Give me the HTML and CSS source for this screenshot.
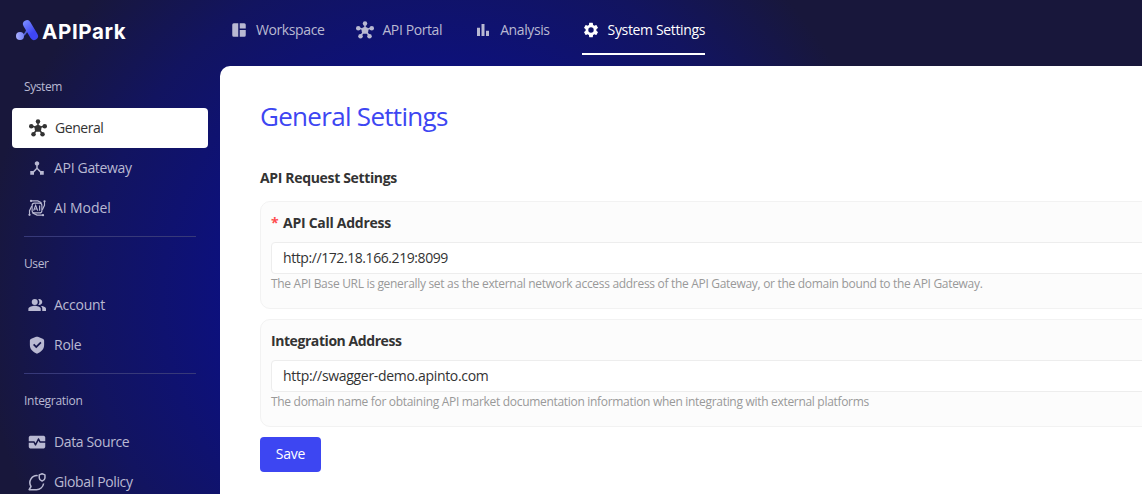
FILE: index.html
```html
<!DOCTYPE html>
<html lang="en">
<head>
<meta charset="utf-8">
<title>APIPark</title>
<link rel="stylesheet" href="styles.css">
</head>
<body>
<svg class="defs" aria-hidden="true">
  <symbol id="hub" viewBox="0 0 24 24"><path stroke="currentColor" stroke-width="2" fill="none" d="M12 12V4M12 12 3.5 9.3M12 12l8.5-2.7M12 12l-6 8M12 12l6 8"/><circle cx="12" cy="12.5" r="4.5"/><circle cx="12" cy="3.3" r="3"/><circle cx="3" cy="9.5" r="3"/><circle cx="21" cy="9.5" r="3"/><circle cx="6" cy="20.3" r="3"/><circle cx="18" cy="20.3" r="3"/></symbol>
</svg>
<div class="app">
  <header class="topbar">
    <div class="brand">
      <svg class="mark" viewBox="0 0 22 20">
        <defs>
          <linearGradient id="g1" gradientUnits="userSpaceOnUse" x1="7" y1="2" x2="20" y2="18"><stop offset="0" stop-color="#7a8cff"/><stop offset="0.7" stop-color="#3f46f5"/></linearGradient>
          <linearGradient id="g2" x1="0" y1="0" x2="1" y2="0"><stop offset="0" stop-color="#aab0ff"/><stop offset="1" stop-color="#7480f5"/></linearGradient>
        </defs>
        <path d="M5 16.2C8.500 16 10 13 11.500 9" fill="none" stroke="#5361d8" stroke-width="1.800"/>
        <path d="M11 4.200 18 16" stroke="url(#g1)" stroke-width="8" stroke-linecap="round"/>
        <circle cx="4" cy="16" r="4" fill="url(#g2)"/>
      </svg>
      <span class="brand-name">APIPark</span>
    </div>
    <nav class="tabs">
      <a class="tab workspace"><svg class="icon" viewBox="0 0 24 24"><path d="M11 21H5a2 2 0 0 1-2-2V5a2 2 0 0 1 2-2h6v18zm2 0h6a2 2 0 0 0 2-2v-7h-8v9zm8-11V5a2 2 0 0 0-2-2h-6v7h8z"/></svg><span>Workspace</span></a>
      <a class="tab portal"><svg class="icon"><use href="#hub"/></svg><span>API Portal</span></a>
      <a class="tab analysis"><svg class="icon" viewBox="0 0 24 24"><path d="M4 9h4v11H4zm12 4h4v7h-4zm-6-9h4v16h-4z"/></svg><span>Analysis</span></a>
      <a class="tab settings active"><svg class="icon" viewBox="0 0 24 24"><path d="M19.14 12.94c.04-.3.06-.61.06-.94 0-.32-.02-.64-.07-.94l2.03-1.58a.49.49 0 0 0 .12-.61l-1.92-3.32a.488.488 0 0 0-.59-.22l-2.39.96c-.5-.38-1.03-.7-1.62-.94l-.36-2.54a.484.484 0 0 0-.48-.41h-3.84c-.24 0-.43.17-.47.41l-.36 2.54c-.59.24-1.13.57-1.62.94l-2.39-.96c-.22-.08-.47 0-.59.22L2.74 8.87c-.12.21-.08.47.12.61l2.03 1.58c-.05.3-.09.63-.09.94s.02.64.07.94l-2.03 1.58a.49.49 0 0 0-.12.61l1.92 3.32c.12.22.37.29.59.22l2.39-.96c.5.38 1.03.7 1.62.94l.36 2.54c.05.24.24.41.48.41h3.84c.24 0 .44-.17.47-.41l.36-2.54c.59-.24 1.13-.56 1.62-.94l2.39.96c.22.08.47 0 .59-.22l1.92-3.32c.12-.22.07-.47-.12-.61l-2.01-1.58zM12 15.6A3.6 3.6 0 1 1 12 8.4a3.6 3.6 0 0 1 0 7.2z"/></svg><span>System Settings</span></a>
    </nav>
  </header>
  <div class="body">
    <aside class="side">
      <section class="group">
        <h2 class="group-title t-system">System</h2>
        <a class="item general active"><svg class="icon"><use href="#hub"/></svg><span>General</span></a>
        <a class="item gateway"><svg class="icon" viewBox="0 0 24 24"><path d="m17 16-4-4V8.82C14.16 8.4 15 7.3 15 6c0-1.66-1.34-3-3-3S9 4.34 9 6c0 1.3.84 2.4 2 2.82V12l-4 4H3v5h5v-3.05l4-4.2 4 4.2V21h5v-5h-4z"/></svg><span>API Gateway</span></a>
        <a class="item model"><svg class="icon" viewBox="0 0 24 24"><g fill="none" stroke="currentColor" stroke-width="1.5"><rect x="5.5" y="5.5" width="13" height="13" rx="3"/><path d="M4 2.500h9l5 2.500M22 3.500v5l-3 6M20 21.500h-8L6 18.500M2 20.500v-5l3-6"/><path d="m7.500 15.500 2.700-7 2.700 7M8.500 13.400h3.500M15.500 8.500v7"/></g><circle cx="4" cy="2.500" r="1.500"/><circle cx="22" cy="3" r="1.500"/><circle cx="20" cy="21.500" r="1.500"/><circle cx="2" cy="21" r="1.500"/></svg><span>AI Model</span></a>
      </section>
      <section class="group">
        <h2 class="group-title t-user">User</h2>
        <a class="item account"><svg class="icon" viewBox="0 0 24 24"><path d="M16.67 13.13C18.04 14.06 19 15.32 19 17v3h5v-3c0-2.18-4.57-3.47-7.33-3.87zM15 12c2.21 0 4-1.79 4-4s-1.79-4-4-4c-.47 0-.91.1-1.33.24a5.98 5.98 0 0 1 0 7.52c.42.14.86.24 1.33.24z"/><circle cx="9" cy="8" r="4"/><path d="M9 13c-2.67 0-8.500 1.340-8.500 4v3H17v-3c0-2.660-5.330-4-8-4z"/></svg><span>Account</span></a>
        <a class="item role"><svg class="icon" viewBox="0 0 24 24"><path fill-rule="evenodd" d="M10.800 1.100Q12 .6 13.200 1.100l6.400 2.500Q21.500 4.300 21.500 6v6c0 5.500-4 9.500-9.500 11.600C6.500 21.500 2.500 17.500 2.500 12V6q0-1.700 1.900-2.400zM11 16.200l7-7-1.600-1.600L11 13l-2.700-2.700-1.600 1.600z"/></svg><span>Role</span></a>
      </section>
      <section class="group">
        <h2 class="group-title t-integration">Integration</h2>
        <a class="item source"><svg class="icon" viewBox="0 0 24 24"><path d="M15.110 12.450 14 10.240l-3.110 6.210c-.16.34-.51.55-.89.55s-.73-.21-.89-.55L7.380 13H1v5c0 1.100.9 2.500 2 2.500h18c1.100 0 2-1.400 2-2.500v-5h-7c-.38 0-.73-.21-.89-.55zM21 3.500H3C1.900 3.500 1 4.900 1 6v5h7c.38 0 .73.21.89.55L10 13.760l3.110-6.210c.34-.68 1.450-.68 1.790 0L16.620 11H23V6c0-1.100-.9-2.500-2-2.500z"/></svg><span>Data Source</span></a>
        <a class="item policy"><svg class="icon" viewBox="0 0 24 24"><g fill="none" stroke="currentColor" stroke-width="2" stroke-linejoin="round"><path d="M13 3.500A9.500 9.500 0 0 0 4 18l-2.500 4.200H11a9.500 9.500 0 0 0 9.800-8.200"/><path d="M15 2.500 18.800 1l3.800 1.500v4c0 2-1.700 3.300-3.800 4.300C16.700 9.800 15 8.500 15 6.500z"/></g></svg><span>Global Policy</span></a>
      </section>
    </aside>
    <main class="page">
      <h1 class="title">General Settings</h1>
      <h2 class="subtitle">API Request Settings</h2>
      <div class="card">
        <label class="label"><span class="required">*</span><span class="l-call">API Call Address</span></label>
        <div class="input"><span class="v-call">http://172.18.166.219:8099</span></div>
        <p class="help"><span class="h-call">The API Base URL is generally set as the external network access address of the API Gateway, or the domain bound to the API Gateway.</span></p>
      </div>
      <div class="card">
        <label class="label"><span class="l-int">Integration Address</span></label>
        <div class="input"><span class="v-int">http://swagger-demo.apinto.com</span></div>
        <p class="help"><span class="h-int">The domain name for obtaining API market documentation information when integrating with external platforms</span></p>
      </div>
      <button class="save">Save</button>
    </main>
  </div>
</div>
</body>
</html>
```
FILE: styles.css
```css
* { box-sizing: border-box; }
body { margin: 0; overflow: hidden; font-family: "Open Sans", "Noto Sans", sans-serif; font-size: 14px; color: #333; }
h1, h2, p { margin: 0; font-weight: 400; }
.defs { display: none; }
.app { height: 494px; overflow: hidden; display: flex; flex-direction: column; background: radial-gradient(circle 460px at 440px 300px, #080d90 0%, #0c107f 45%, #121460 76%, #18173b 100%); }
.icon { width: 18px; height: 18px; flex: none; fill: currentColor; overflow: visible; }
.topbar { height: 66px; flex: none; display: flex; align-items: flex-start; }
.brand { width: 230px; flex: none; padding: 20px 0 0 16px; display: flex; align-items: flex-start; gap: 4px; }
.mark { width: 22px; height: 20px; overflow: visible; }
.brand-name { font: 700 20.5px/24px "Inter", sans-serif; letter-spacing: .65px; color: #fff; }
.tabs { display: flex; height: 55px; padding-top: 6px; }
.tab { display: flex; align-items: center; gap: 8px; color: #b9b9d2; white-space: nowrap; border-bottom: 2px solid transparent; margin-right: 32px; letter-spacing: -.4px; }
.tab.active { color: #fff; border-color: #fff; letter-spacing: -.35px; }
.body { flex: 1; min-height: 0; display: flex; }
.side { width: 220px; flex: none; padding: 1px 12px 0; color: #b9b9d2; }
.group + .group { margin-top: 8px; }
.group + .group::before { content: ""; display: block; height: 1px; margin: 0 12px 7px; background: #373979; }
.group-title { height: 40px; padding-left: 12px; font-size: 12px; line-height: 40px; }
.group + .group .group-title { height: 41px; }
.t-system, .t-user { letter-spacing: -.4px; }
.t-integration { letter-spacing: -.28px; }
.item { height: 40px; padding-left: 16px; display: flex; align-items: center; gap: 8px; white-space: nowrap; }
.item span { padding-bottom: 2px; }
.item.active { margin-top: 1px; background: #fff; color: #333; border-radius: 4px; padding-left: 17px; }
.general { letter-spacing: -.45px; }
.gateway { letter-spacing: -.32px; }
.model { letter-spacing: -.1px; }
.account, .role { letter-spacing: -.25px; }
.source, .policy { letter-spacing: -.36px; }
.page { flex: 1; min-width: 0; background: #fff; border-radius: 10px 0 0; padding: 31px 0 0 40px; overflow: hidden; }
.title { font-size: 26px; line-height: 38px; padding-bottom: 2px; color: #3d46f2; letter-spacing: -.7px; }
.subtitle { font-size: 14px; font-weight: 700; line-height: 22px; margin: 30px 0 12px; letter-spacing: -.34px; }
.card { width: 920px; height: 108px; margin-bottom: 10px; padding: 10px; background: #fcfcfc; border: 1px solid #f2f2f2; border-radius: 10px; }
.label { display: flex; height: 22px; padding-bottom: 2px; align-items: center; font-weight: 700; }
.required { width: 12px; color: #ff4d4f; }
.l-call { letter-spacing: -.27px; }
.l-int { letter-spacing: -.43px; }
.input { height: 32px; margin-top: 8px; padding: 0 0 2px 11px; display: flex; align-items: center; background: #fff; border: 1px solid #ededed; border-radius: 4px; }
.v-call { letter-spacing: -.42px; }
.v-int { letter-spacing: -.31px; }
.help { font-size: 12px; line-height: 20px; color: #999; white-space: nowrap; letter-spacing: -.305px; }
.save { display: block; width: 61px; height: 35px; border: 0; padding: 0 0 2px; border-radius: 4px; background: #3d46f2; color: #fff; font: inherit; letter-spacing: -.2px; }
```
